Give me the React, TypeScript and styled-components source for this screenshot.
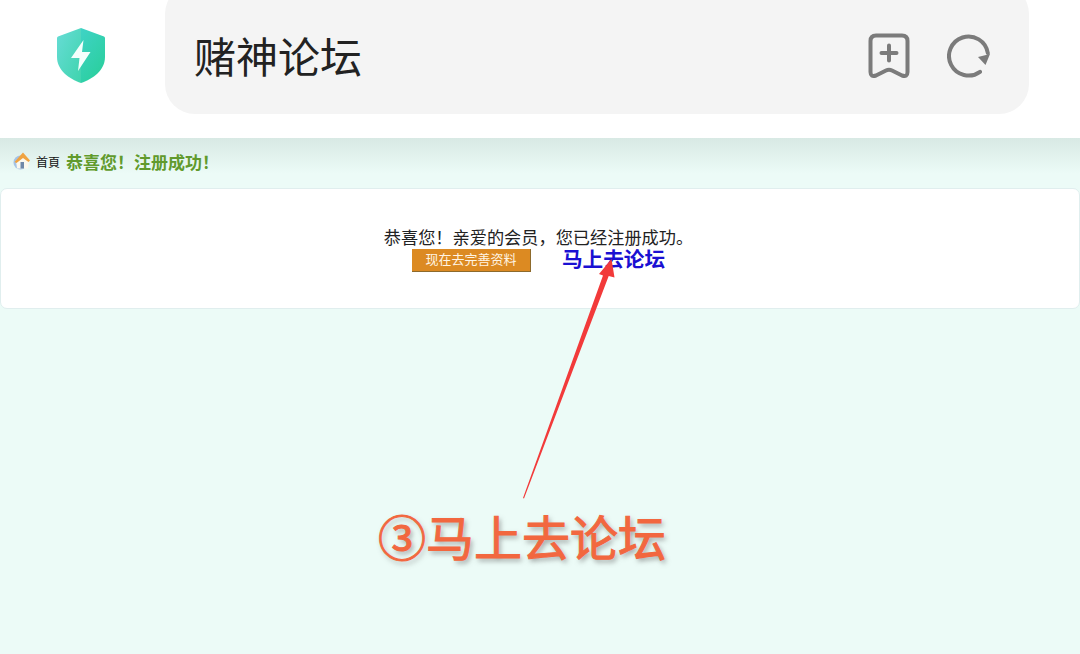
import React from 'react'
import styled, { createGlobalStyle } from 'styled-components'

const CJK = '"Noto Sans CJK SC", "Liberation Sans", sans-serif'

const CRUMB_TITLE = '恭喜您\uFF01注册成功\uFF01'
const MESSAGE = '恭喜您\uFF01亲爱的会员\uFF0C您已经注册成功。'

const GlobalStyle = createGlobalStyle`
  html, body {
    margin: 0;
    padding: 0;
    height: 100%;
    background: #ecfbf7;
    overflow: hidden;
  }
  #root {
    height: 100%;
  }
`

const App: React.FC = () => {
  return (
    <Page>
      <GlobalStyle />
      <TopBar>
        <ShieldSlot>
          <svg width="50" height="58" viewBox="0 0 50 58">
            <defs>
              <linearGradient id="shieldLeft" x1="0" y1="0" x2="1" y2="1">
                <stop offset="0" stopColor="#67dcd6" />
                <stop offset="1" stopColor="#3fd4ad" />
              </linearGradient>
              <linearGradient id="shieldRight" x1="0" y1="0" x2="0.6" y2="1">
                <stop offset="0" stopColor="#3fd3c6" />
                <stop offset="1" stopColor="#2bcf9e" />
              </linearGradient>
            </defs>
            <path d="M25 1 L2 9.5 Q1 10 1 11 V30 C1 43 13 52 25 56 Z" fill="url(#shieldLeft)" />
            <path d="M25 1 L48 9.5 Q49 10 49 11 V30 C49 43 37 52 25 56 Z" fill="url(#shieldRight)" />
            <path d="M27.5 13 L15 31 H23.5 L22 44 L34.5 25 H26 Z" fill="#f4fffc" />
          </svg>
        </ShieldSlot>
        <AddressPill>
          <AddressText>赌神论坛</AddressText>
          <PillIcons>
            <svg width="42" height="46" viewBox="0 0 42 46" fill="none" stroke="#7b7b7b" strokeWidth="4" strokeLinecap="round" strokeLinejoin="round">
              <path d="M8 2.5 H34 Q39.5 2.5 39.5 8 V39 Q39.5 44.5 34 42.5 L24 37.5 Q21 36 18 37.5 L8 42.5 Q2.5 44.5 2.5 39 V8 Q2.5 2.5 8 2.5 Z" />
              <path d="M21 12.5 V27.5 M13.5 20 H28.5" />
            </svg>
            <svg width="44" height="44" viewBox="0 0 44 44" fill="none">
              <path d="M40.8 19 A19.5 19.5 0 1 0 33 37.8" stroke="#7b7b7b" strokeWidth="4" strokeLinecap="round" />
              <path d="M31 23 L43 20 L38.5 31 Z" fill="#7b7b7b" />
            </svg>
          </PillIcons>
        </AddressPill>
      </TopBar>

      <WebView>
        <Breadcrumb>
          <svg width="18" height="18" viewBox="0 0 18 18">
            <circle cx="7.5" cy="10.5" r="7" fill="#a4c3e6" />
            <path d="M3 9 L10 2.5 L16 9 L15 16.5 L4 16.5 Z" fill="#fbf8ee" />
            <path d="M1.5 10 L10 0.5 L17 8.5 L15.5 10 L10 6 L3.5 11 Z" fill="#f0a341" />
            <rect x="7.5" y="10" width="3.5" height="6.5" fill="#6f88a8" />
          </svg>
          <HomeLink>首頁</HomeLink>
          <CrumbTitle>{CRUMB_TITLE}</CrumbTitle>
        </Breadcrumb>

        <Card>
          <Message>{MESSAGE}</Message>
          <ActionRow>
            <ProfileButton>现在去完善资料</ProfileButton>
            <ForumLink>马上去论坛</ForumLink>
          </ActionRow>
        </Card>
      </WebView>

      <ArrowOverlay width="1080" height="654" viewBox="0 0 1080 654">
        <path d="M523 498 L603 275.5 L599 274 L611.5 259 L614.5 277.5 L608.7 276 L524 498.5 Z" fill="#f23a3a" />
      </ArrowOverlay>
      <Caption>③马上去论坛</Caption>
    </Page>
  )
}

const Page = styled.div`
  position: relative;
  width: 1080px;
  height: 654px;
  overflow: hidden;
  background: #ecfbf7;
  font-family: ${CJK};
`
const TopBar = styled.header`
  display: flex;
  align-items: flex-start;
  height: 138px;
  background: #ffffff;
  overflow: hidden;
`
const ShieldSlot = styled.div`
  display: flex;
  justify-content: center;
  width: 165px;
  padding-top: 27px;
  padding-right: 3px;
  box-sizing: border-box;
`
const AddressPill = styled.div`
  display: flex;
  align-items: center;
  justify-content: space-between;
  width: 864px;
  height: 130px;
  margin-top: -16px;
  padding: 14px 38px 0 29px;
  box-sizing: border-box;
  background: #f4f4f4;
  border-radius: 30px;
`
const AddressText = styled.div`
  font-size: 42px;
  line-height: 1;
  margin-top: -2px;
  color: #222222;
`
const PillIcons = styled.div`
  display: flex;
  align-items: center;
  gap: 37px;
`
const WebView = styled.main`
  background: linear-gradient(#d8e9e4 0, #ecfbf7 36px);
  height: 516px;
  padding-top: 10px;
  box-sizing: border-box;
`
const Breadcrumb = styled.nav`
  display: flex;
  align-items: center;
  height: 26px;
  padding-left: 13px;
`
const HomeLink = styled.span`
  margin-left: 5px;
  font-size: 12px;
  color: #111111;
`
const CrumbTitle = styled.span`
  margin-left: 6px;
  font-size: 17px;
  font-weight: 700;
  color: #619a2c;
`
const Card = styled.section`
  display: flex;
  flex-direction: column;
  align-items: center;
  height: 121px;
  margin-top: 14px;
  padding-top: 37px;
  box-sizing: border-box;
  background: #ffffff;
  border: 1px solid #e0eeee;
  border-radius: 7px;
`
const Message = styled.div`
  font-size: 17.2px;
  line-height: 22px;
  color: #222222;
  margin-right: 3px;
`
const ActionRow = styled.div`
  display: flex;
  align-items: flex-start;
  gap: 31px;
  margin-top: 1px;
  margin-left: 1px;
  margin-right: 4px;
`
const ProfileButton = styled.div`
  width: 119px;
  height: 23px;
  box-sizing: border-box;
  text-align: center;
  font-size: 13px;
  line-height: 20px;
  color: #fff4e2;
  background: #dc8a22;
  border-right: 1px solid #8d6a2c;
  border-bottom: 1px solid #8d6a2c;
`
const ForumLink = styled.span`
  font-size: 20.6px;
  line-height: 18px;
  font-weight: 700;
  color: #1a10d2;
`
const ArrowOverlay = styled.svg`
  position: absolute;
  left: 0;
  top: 0;
  pointer-events: none;
`
const Caption = styled.div`
  position: absolute;
  left: 378px;
  top: 501px;
  font-size: 48px;
  line-height: 68px;
  font-weight: 400;
  -webkit-text-stroke: 1px #f2673f;
  white-space: nowrap;
  color: #f2673f;
  text-shadow: 2px 3px 5px rgba(90, 90, 90, 0.55);
`

export default App
